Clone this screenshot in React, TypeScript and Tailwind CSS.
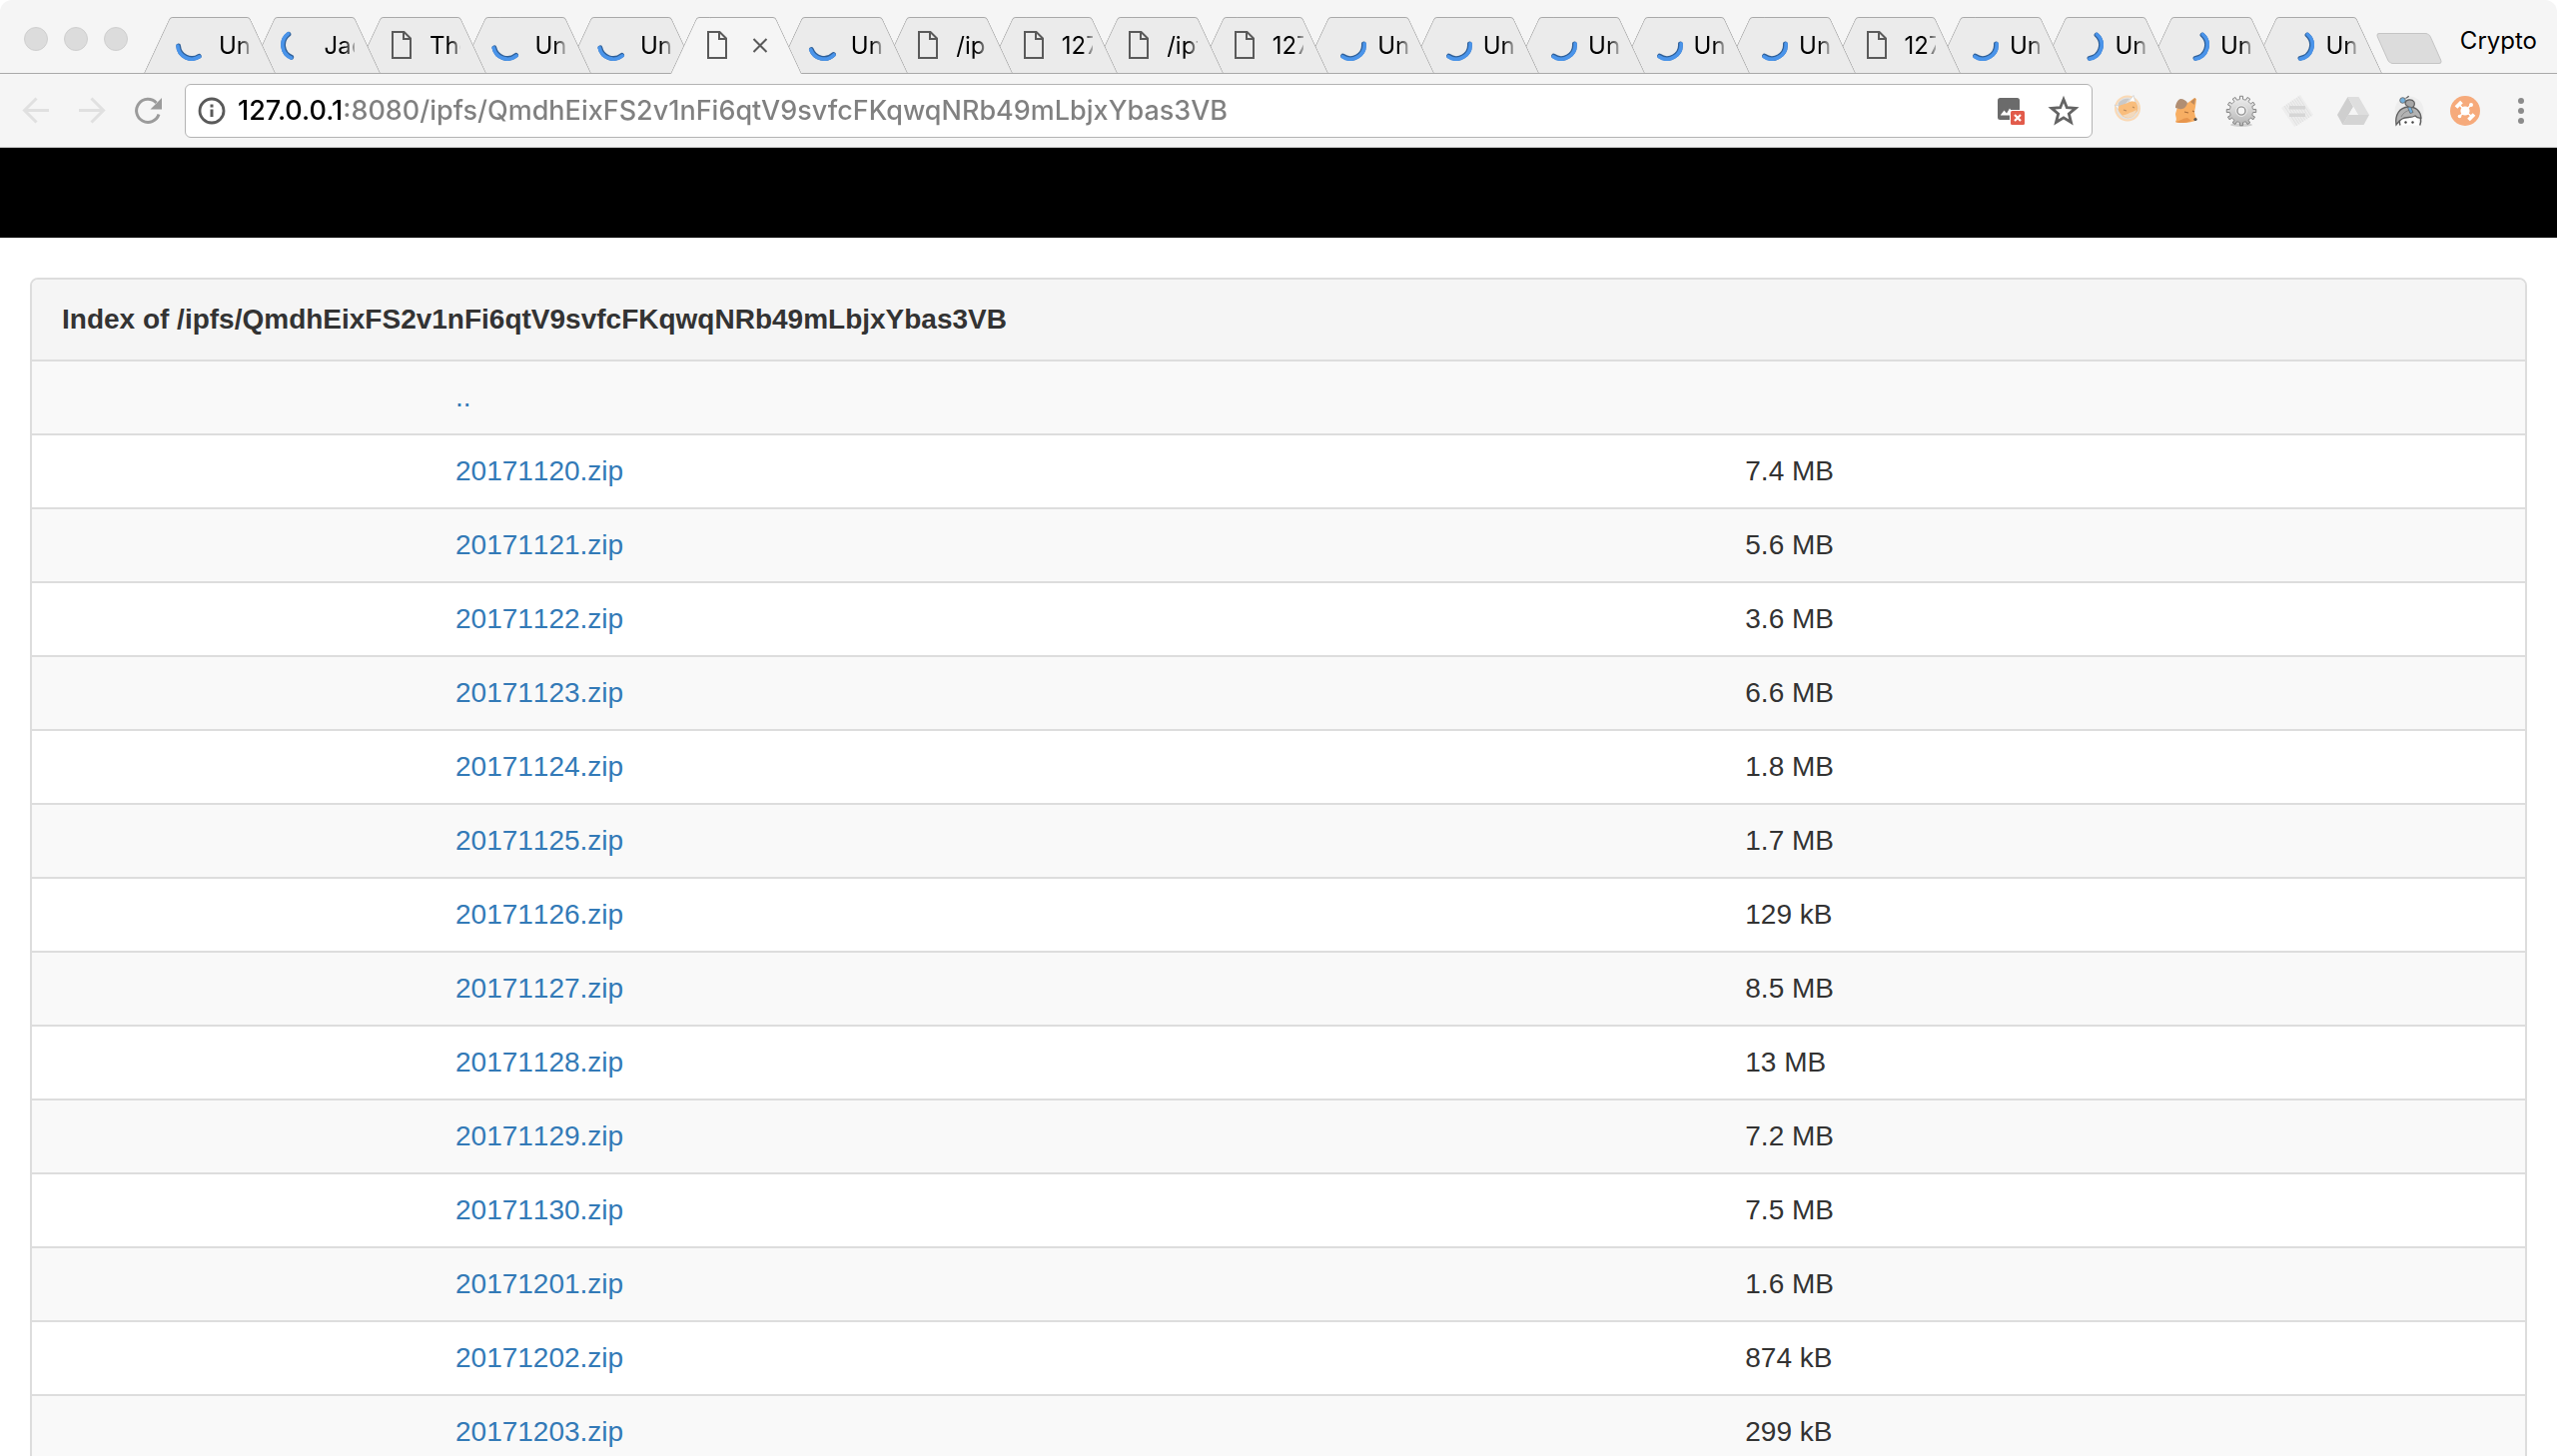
import React from "react";

type Tab = { title: string; kind: "page" | "loading"; from?: number; to?: number; active?: boolean };

const page = (title: string, active = false): Tab => ({ title, kind: "page", active });
const loading = (title: string, from: number, to: number): Tab => ({ title, kind: "loading", from, to });

const tabs: Tab[] = [
  loading("Un", 57, 176),
  loading("Jac", 113, 233),
  page("The"),
  loading("Un", 50, 168),
  loading("Un", 50, 168),
  page("", true),
  loading("Un", 45, 160),
  page("/ip"),
  page("127"),
  page("/ipf"),
  page("127"),
  loading("Un", -5, 124),
  loading("Un", -5, 124),
  loading("Un", -5, 124),
  loading("Un", -5, 124),
  loading("Un", -5, 124),
  page("127"),
  loading("Un", -5, 124),
  loading("Un", -48, 82),
  loading("Un", -48, 82),
  loading("Un", -48, 82),
];

const files: [string, string][] = [
  ["..", ""],
  ["20171120.zip", "7.4 MB"],
  ["20171121.zip", "5.6 MB"],
  ["20171122.zip", "3.6 MB"],
  ["20171123.zip", "6.6 MB"],
  ["20171124.zip", "1.8 MB"],
  ["20171125.zip", "1.7 MB"],
  ["20171126.zip", "129 kB"],
  ["20171127.zip", "8.5 MB"],
  ["20171128.zip", "13 MB"],
  ["20171129.zip", "7.2 MB"],
  ["20171130.zip", "7.5 MB"],
  ["20171201.zip", "1.6 MB"],
  ["20171202.zip", "874 kB"],
  ["20171203.zip", "299 kB"],
];

const arc = (r: number, from: number, to: number) => {
  const at = (deg: number) => {
    const a = (deg * Math.PI) / 180;
    return `${(16 + r * Math.cos(a)).toFixed(2)} ${(16 + r * Math.sin(a)).toFixed(2)}`;
  };
  return `M${at(from)}A${r} ${r} 0 0 1 ${at(to)}`;
};

function Spinner({ from, to }: { from: number; to: number }) {
  return (
    <svg viewBox="0 0 32 32" className="size-8" fill="none" strokeLinecap="round">
      <path d={arc(13.4, from, to)} stroke="#2f6099" strokeWidth="4.8" />
      <path d={arc(14.1, from, to)} stroke="#4a94ea" strokeWidth="3.6" />
    </svg>
  );
}

function PageIcon() {
  return (
    <svg viewBox="0 0 32 32" className="size-8" fill="none" stroke="#5a5a5a" strokeWidth="2">
      <path d="M6 3h11.5L24 9.500V29H6z" />
      <path d="M17 3v7h7" />
    </svg>
  );
}

function TabItem({ tab, order }: { tab: Tab; order: number }) {
  const fill = tab.active ? "bg-[#f5f5f5] border-[#a9a9a9]" : "bg-[#ebebeb] border-[#a9a9a9]";
  return (
    <div
      role="tab"
      aria-selected={!!tab.active}
      className={`relative min-w-0 flex-1 ${tab.active ? "-mb-px h-[57px]" : "h-14"}`}
      style={{ zIndex: order }}
    >
      <div className="absolute inset-y-0 left-0 -right-[26px] flex">
        <div className={`flex-1 origin-bottom -skew-x-[25deg] rounded-tl-[3px] border-t border-l ${fill}`} />
        <div className={`flex-1 origin-bottom skew-x-[25deg] rounded-tr-[3px] border-t border-r ${fill}`} />
      </div>
      <div className="relative flex h-14 items-center pl-8">
        <span className="shrink-0">{tab.kind === "page" ? <PageIcon /> : <Spinner from={tab.from!} to={tab.to!} />}</span>
        {tab.active ? (
          <button aria-label="Close tab" className="ml-[18px] shrink-0">
            <svg viewBox="0 0 16 16" className="size-4" stroke="#5a5a5a" strokeWidth="2">
              <path d="M1.500 2l13 13M14.500 2l-13 13" />
            </svg>
          </button>
        ) : (
          <span className="ml-[11px] w-[31px] shrink-0 overflow-hidden pt-0.5 text-2xl whitespace-nowrap text-black [mask-image:linear-gradient(to_right,#000_65%,#0004)]">
            {tab.title}
          </span>
        )}
      </div>
    </div>
  );
}

function Ext({ label, children }: { label: string; children: React.ReactNode }) {
  return (
    <button aria-label={label} className="size-8 shrink-0">
      <svg viewBox="0 0 32 32" className="size-8" fill="none">
        {children}
      </svg>
    </button>
  );
}

const gearPath = (() => {
  const teeth = 12;
  let d = "";
  for (let i = 0; i < teeth; i++) {
    const step = (Math.PI * 2) / teeth;
    const a = i * step - Math.PI / 2;
    const pts: [number, number][] = [
      [11.6, -0.38],
      [11.8, -0.25],
      [14.8, -0.2],
      [14.8, 0.2],
      [11.8, 0.25],
      [11.6, 0.38],
    ];
    pts.forEach(([r, o], k) => {
      const t = a + o * step;
      d += `${i === 0 && k === 0 ? "M" : "L"}${(16 + r * Math.cos(t)).toFixed(2)} ${(16 + r * Math.sin(t)).toFixed(2)}`;
    });
  }
  return d + "Z";
})();

function Extensions() {
  return (
    <div className="flex gap-6">
      <Ext label="Fox badge">
        <circle cx="14" cy="13.500" r="12" fill="#e2e2e2" stroke="#fad9b5" strokeWidth="2" />
        <path d="M5 8c3-4 8-5 11-4l-4 5-7 6z" fill="#c9c9c9" />
        <path d="M15 7l5-6.500 2 7zM5 11l-4-1 5 6z" fill="#fff" stroke="#cfcfcf" strokeWidth=".8" />
        <path d="M5 12c2-3 6-2 9-4 2-1.500 6-2 8-1 2 2 3 6 2 9l-4 5c-3 3-9 3-12-1-2-2-4-5-3-8z" fill="#f9bd7c" />
        <path d="M9 20c3 1 6-2 10-3l4-2c-1 5-4 8-8 8-3 0-5-1-6-3z" fill="#f3d9bc" />
        <path d="M10 15l3 1M19 12l2 1" stroke="#b98a5c" strokeWidth="1.200" />
      </Ext>
      <Ext label="Fox">
        <path d="M8 12l9-3 8-6 2 1-1 8-1 5 1 5c2 1 2 3 0 4-6 2-14 3-20 1 2-3 0-5 0-8z" fill="#f7ae63" />
        <path d="M6 13c0-4 2-8 5-9 3 0 6 2 7 4-1 4-4 7-8 6z" fill="#b08e73" />
        <path d="M21 7l5-4-1 7z" fill="#bf8a5a" />
        <path d="M6 27c5-1 8-4 12-4l4 3c-5 2-12 3-16 1z" fill="#e7954d" />
        <path d="M15 17l4 1M23 16l2 1" stroke="#a86c38" strokeWidth="1.200" />
        <circle cx="26" cy="24.500" r="1.600" fill="#555" />
      </Ext>
      <Ext label="Settings gear">
        <defs>
          <linearGradient id="gear" x1="0" y1="0" x2="0" y2="1">
            <stop offset="0" stopColor="#f0f0f0" />
            <stop offset="1" stopColor="#b4b4b4" />
          </linearGradient>
        </defs>
        <ellipse cx="16" cy="30" rx="11" ry="1.800" fill="#cecece" />
        <path d={gearPath} fill="url(#gear)" stroke="#858585" strokeWidth="1" strokeLinejoin="round" />
        <circle cx="16" cy="16" r="5.400" stroke="#ececec" />
        <circle cx="16" cy="16" r="4" fill="#f5f5f5" stroke="#8a8a8a" strokeWidth="1.200" />
      </Ext>
      <Ext label="Notes">
        <path d="M19 0L32 20 13 32 0 13z" fill="#ededed" />
        <path
          d="M17 1.500l13 20M15 3l13 20M13 4.300l13 20M11 5.600l13 20M9 7l13 20M7 8.300l13 20M5 9.600l13 20M3 11l13 20"
          stroke="#dddddd"
          strokeWidth=".8"
        />
        <path d="M8 11h16v3.500H8zM8 18.500h16V22H8z" fill="#d6d6d6" />
      </Ext>
      <Ext label="Drive">
        <path d="M10.500 2L16 12 5.500 30 0 20z" fill="#cfcfcf" />
        <path d="M10.500 2h11L32 20H21z" fill="#dedede" />
        <path d="M11 20h21l-5.500 10h-21z" fill="#d4d4d4" />
        <path d="M16 12l4.600 8H11.400z" fill="#f5f5f5" />
      </Ext>
      <Ext label="Avatar">
        <circle cx="16" cy="16" r="14.500" fill="#ededed" />
        <path d="M6.500 30.500V20h19v10.500z" fill="#fff" />
        <path
          d="M3 30C1.500 20 6.500 12.500 15 12c8-.3 12.500 4.500 13 11-2 .5-4 0-6-2-4 2.500-9 .5-13 3-3 1.500-4 3.500-6 6z"
          fill="#b3b3b3"
          stroke="#606060"
          strokeWidth="1.300"
        />
        <path d="M27.500 23c.5 3 .3 5-.8 7.500M6.500 25.500c-.3 2 0 3.500.5 5" stroke="#606060" strokeWidth="1.500" />
        <path d="M8 22c2-4 5-6 9-7" stroke="#8a8a8a" />
        <path d="M12 8c1-4 7-4 9-1 1 3 0 5-3 6-3-1-6-2-6-5z" fill="#a6a6a6" stroke="#606060" strokeWidth="1.200" />
        <circle cx="9.500" cy="5.500" r="2.800" fill="#74b0dc" stroke="#606060" strokeWidth=".8" />
        <path d="M12.500 3.500c1.500-1 2.500-1 3-2.500" stroke="#606060" strokeWidth="1.200" />
        <path d="M14.500 12.500l3-.5 2.500 5.500-3 1z" fill="#74b0dc" stroke="#606060" strokeWidth=".7" />
        <circle cx="12.500" cy="27.500" r="1.200" fill="#444" />
        <circle cx="19.500" cy="27.500" r="1.200" fill="#444" />
      </Ext>
      <Ext label="Network">
        <circle cx="16" cy="16" r="15" fill="#f6aa7b" />
        <path d="M16 16l6-6M16 16l-5.500 5.500M16 16l-6-6.500M16 16l7 6" stroke="#fff" strokeWidth="1.600" />
        <circle cx="16" cy="16" r="4.600" fill="#fff" />
        <circle cx="22" cy="10" r="2" fill="#fff" />
        <circle cx="10.500" cy="21.500" r="1.800" fill="#fff" />
        <path d="M7 12.500l5.500-5.500M19.500 25l5.500-5.500" stroke="#fff" strokeWidth="3.800" />
      </Ext>
      <Ext label="Menu">
        <g fill="#8b8b8b">
          <circle cx="16" cy="6" r="3" />
          <circle cx="16" cy="16" r="3" />
          <circle cx="16" cy="26" r="3" />
        </g>
      </Ext>
    </div>
  );
}

function TabStrip() {
  return (
    <div className="flex h-[74px] items-end border-b border-[#a9a9a9]">
      <div className="flex shrink-0 gap-4 self-center pt-1 pl-6">
        {["Close", "Minimize", "Zoom"].map((name) => (
          <button key={name} aria-label={name} className="size-6 rounded-full border border-[#cfcfcf] bg-[#dcdcdc]" />
        ))}
      </div>
      <div role="tablist" className="ml-4 flex min-w-0 flex-1 items-end">
        {tabs.map((tab, i) => (
          <TabItem key={i} tab={tab} order={tab.active ? 50 : tabs.length - i} />
        ))}
      </div>
      <button
        aria-label="New tab"
        className="mb-[9px] ml-[26px] h-[31px] w-[54px] shrink-0 skew-x-[24deg] rounded border border-[#c4c4c4] bg-[#dcdcdc]"
      />
      <span className="mr-5 mb-4 ml-6 text-2xl text-black">Crypto</span>
    </div>
  );
}

function Toolbar() {
  return (
    <div className="flex h-[74px] items-center border-b border-[#cfcfcf] px-5">
      <div className="flex gap-6">
        <button aria-label="Back" className="size-8">
          <svg viewBox="0 0 32 32" className="size-8" fill="none" stroke="#e0e0e0" strokeWidth="3">
            <path d="M29 15.500H5M16.500 3.500l-12 12 12 12" />
          </svg>
        </button>
        <button aria-label="Forward" className="size-8">
          <svg viewBox="0 0 32 32" className="size-8" fill="none" stroke="#e0e0e0" strokeWidth="3">
            <path d="M3 15.500h24M15.500 3.500l12 12-12 12" />
          </svg>
        </button>
        <button aria-label="Reload" className="size-8">
          <svg viewBox="0 0 32 32" className="size-8" fill="none">
            <path d="M27 19.500A11.500 11.500 0 1 1 24.500 8" stroke="#9b9b9b" strokeWidth="3" />
            <path d="M30 3v11.500H18.500z" fill="#9b9b9b" />
          </svg>
        </button>
      </div>
      <div className="mx-[21px] flex h-[54px] min-w-0 flex-1 items-center rounded-md border border-[#b3b3b3] bg-white px-3">
        <button aria-label="Site information" className="shrink-0">
          <svg viewBox="0 0 28 28" className="size-7" fill="none">
            <circle cx="14" cy="14" r="12" stroke="#5a5a5a" strokeWidth="2.800" />
            <path d="M14 12.500V20" stroke="#5a5a5a" strokeWidth="3" />
            <path d="M14 7.500v3" stroke="#5a5a5a" strokeWidth="3" />
          </svg>
        </button>
        <input
          aria-label="Address"
          type="text"
          defaultValue="127.0.0.1:8080/ipfs/QmdhEixFS2v1nFi6qtV9svfcFKqwqNRb49mLbjxYbas3VB"
          className="ml-3 min-w-0 flex-1 bg-[linear-gradient(to_right,#000_106px,#808080_106px)] bg-clip-text text-[27px] leading-10 font-medium text-transparent outline-none"
        />
        <button aria-label="Images blocked" className="ml-4 shrink-0">
          <svg viewBox="0 0 28 28" className="size-7" fill="none">
            <rect x="0" y="1" width="22" height="22" rx="2.500" fill="#6b6b6b" />
            <path d="M3 18l3.500-4.500L9 16.500l3-5 5 7H3z" fill="#fff" />
            <rect x="12" y="13" width="17" height="17" fill="#fff" />
            <rect x="13" y="14" width="14" height="14" rx="1.500" fill="#e25b4b" />
            <path d="M17 18l6 6M23 18l-6 6" stroke="#fff" strokeWidth="2.200" />
          </svg>
        </button>
        <button aria-label="Bookmark this page" className="ml-[22px] shrink-0">
          <svg viewBox="0 0 32 32" className="size-8" fill="none">
            <path
              d="M16 4.500l3.300 8.200 8.700.6-6.700 5.600 2.200 8.600L16 22.800l-7.500 4.700 2.200-8.600L4 13.300l8.700-.6z"
              stroke="#646464"
              strokeWidth="2.800"
            />
          </svg>
        </button>
      </div>
      <Extensions />
    </div>
  );
}

export default function App() {
  return (
    <div className="h-screen overflow-hidden bg-white">
      <header className="rounded-t-xl bg-[#f5f5f5] font-[Inter,sans-serif]">
        <TabStrip />
        <Toolbar />
      </header>
      <div className="h-[90px] bg-black" />
      <main className="px-[30px] pt-10 font-['Liberation_Sans',Arial,sans-serif] text-[28px] leading-10 text-[#333333]">
        <section className="overflow-hidden rounded-t-lg border-2 border-[#dddddd]">
          <h1 className="bg-[#f5f5f5] px-[30px] py-5 font-bold">
            Index of /ipfs/QmdhEixFS2v1nFi6qtV9svfcFKqwqNRb49mLbjxYbas3VB
          </h1>
          <table className="w-full table-fixed border-collapse [font-kerning:none]" aria-label="Directory listing">
            <colgroup>
              <col className="w-[406px]" />
              <col />
              <col className="w-[32%]" />
            </colgroup>
            <tbody>
              {files.map(([name, size]) => (
                <tr key={name} className="border-t-2 border-[#dddddd] odd:bg-[#f9f9f9]">
                  <td className="px-[18px] py-4" />
                  <td className="px-[18px] py-4">
                    <a href={`#${name}`} className="text-[#337ab7]">
                      {name}
                    </a>
                  </td>
                  <td className="px-[18px] py-4">{size}</td>
                </tr>
              ))}
            </tbody>
          </table>
        </section>
      </main>
    </div>
  );
}
